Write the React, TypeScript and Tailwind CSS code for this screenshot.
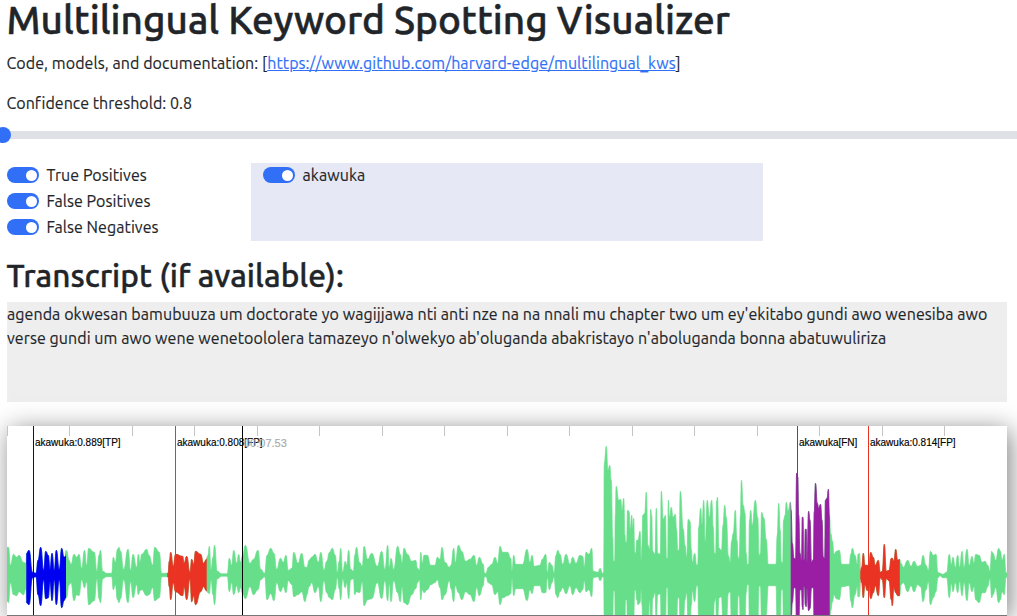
type Sample = [x: number, up: number, down: number];

const CENTER = 149;
const ORIGIN = 7;

const samples: Sample[] = [
  [7, 28, 26], [8.5, 28, 28], [10.5, 10, 8], [13.5, 21, 20], [16.7, 18, 21], [19, 20, 17], [23.5, 13, 20],
  [26, 12, 14], [26.5, 22, 28], [29, 25, 30], [32.5, 3, 3], [36, 2, 2], [38, 15, 20], [40.7, 28, 31],
  [43.7, 5, 5], [45.7, 24, 24], [48.3, 20, 23], [50, 6, 7], [52, 22, 26], [54.3, 5, 5], [56.3, 25, 30],
  [59.3, 6, 5], [61.7, 27, 33], [64, 18, 26], [65.7, 19, 23], [66.5, 25, 23], [69, 15, 10], [71, 11, 8],
  [74, 21, 26], [76.7, 18, 20], [79, 21, 21], [81.7, 7, 5], [84.5, 25, 13], [86.7, 10, 7], [88.7, 27, 30],
  [94.3, 23, 26], [97, 4, 4], [99, 20, 24], [100.5, 25, 28], [102.7, 4, 4], [106.7, 2, 2], [111.7, 2, 2],
  [113.3, 18, 15], [115.3, 13, 10], [117.5, 26, 25], [119, 28, 28], [120.5, 24, 24], [123.7, 6, 5],
  [128, 26, 28], [130.7, 5, 7], [133, 21, 23], [136.7, 8, 10], [138.3, 21, 20], [140, 13, 16],
  [141.7, 21, 15], [146.7, 26, 21], [149, 20, 20], [152.7, 10, 13], [154.7, 28, 26], [159.3, 23, 23],
  [161.7, 2, 2], [168, 2, 2], [169.3, 14, 12], [170.7, 23, 25], [173.3, 9, 8], [175.5, 21, 17],
  [182.7, 19, 21], [184, 12, 12], [186.7, 19, 25], [190, 3, 4], [191.7, 16, 27], [193.7, 11, 21],
  [195.5, 24, 30], [200.7, 21, 17], [203.5, 12, 12], [206.5, 16, 16], [208, 20, 18], [209.3, 29, 19],
  [211, 6, 5], [213, 18, 20], [214.5, 30, 30], [217.3, 4, 4], [221.7, 1.5, 1.5], [227.3, 1.5, 1.5],
  [229.3, 17, 17], [231.7, 10, 8], [233.7, 25, 20], [236.7, 12, 11], [238.7, 21, 18], [240.5, 13, 13],
  [242.7, 20, 19], [245.3, 30, 24], [250, 12, 12], [253.5, 16, 20], [258, 25, 15], [260.7, 6, 5],
  [264.7, 2, 2], [267, 20, 25], [270.7, 27, 19], [274, 22, 26], [276.7, 6, 8], [280.5, 17, 17],
  [283.3, 13, 12], [286, 20, 18], [288.3, 5, 6], [292, 7, 10], [293.7, 23, 22], [298, 12, 20],
  [301.7, 22, 17], [305, 8, 27], [307, 8, 20], [309, 15, 12], [311.7, 18, 8], [315, 21, 18],
  [318.3, 13, 12], [320.9, 23, 27], [324, 5, 6], [326.7, 14, 18], [329.5, 23, 23], [332.3, 27, 25],
  [335.3, 20, 15], [337.3, 3, 3], [339.2, 14, 14], [340.7, 27, 25], [342.7, 3, 4], [345.3, 14, 13],
  [346.7, 10, 8], [348.7, 25, 24], [350.7, 6, 5], [353.5, 4, 4], [354.7, 20, 20], [356.5, 28, 17],
  [359.5, 13, 18], [362.3, 9, 7], [364, 29, 31], [367.7, 16, 25], [371.7, 22, 24], [377.3, 9, 8],
  [381.7, 24, 24], [385, 6, 6], [387.7, 30, 26], [389.3, 8, 9], [391, 17, 27], [393.7, 6, 6],
  [397.7, 29, 18], [400.3, 21, 27], [402, 12, 12], [404, 27, 28], [407.5, 21, 30], [411.7, 14, 20],
  [415.7, 15, 14], [417.5, 7, 8], [419.6, 5, 5], [420.7, 23, 25], [422.3, 12, 15], [424, 20, 18],
  [427.3, 20, 15], [430.7, 10, 10], [435, 10, 8], [437.3, 18, 5], [440, 16, 13], [442, 28, 25],
  [445, 13, 20], [449.3, 8, 6], [451, 10, 14], [453.7, 27, 27], [455.3, 13, 11], [458.5, 30, 18],
  [461.7, 24, 25], [465.7, 14, 17], [470, 16, 20], [474, 20, 27], [476.7, 10, 13], [479.3, 18, 21],
  [483.3, 11, 11], [484.5, 2, 2], [486, 2, 2], [488.3, 8, 8], [491.7, 11, 10], [495, 18, 20],
  [497.7, 12, 17], [500, 29, 30], [502.7, 23, 23], [507.7, 23, 21], [510.7, 17, 19], [512, 4, 4],
  [513.7, 20, 21], [515.7, 11, 14], [522.7, 11, 14], [527, 26, 26], [530, 13, 15], [532, 20, 19],
  [534.3, 9, 11], [540, 10, 11], [542.3, 16, 18], [545.7, 21, 18], [547.5, 3, 3], [549.3, 13, 15],
  [552, 10, 8], [554, 2, 2], [556, 20, 20], [557.7, 25, 23], [560, 21, 17], [562.7, 11, 13],
  [566, 21, 19], [570, 11, 11], [572.7, 18, 20], [576, 12, 13], [580, 20, 18], [582.7, 19, 15],
  [584.3, 8, 6], [586, 23, 17], [589, 21, 15], [591.7, 27, 22], [593.3, 4, 3], [598, 3, 2],
  [600, 7, 6], [602.7, 2, 2], [603.7, 3, 3], [604.3, 112, 50], [606.3, 129, 50], [608, 105, 50],
  [609.7, 110, 50], [611.3, 95, 50], [612.7, 38, 50], [613.5, 14, 16], [614.7, 14, 16], [615.3, 60, 50],
  [616.2, 89, 50], [618.7, 75, 50], [620.7, 76, 50], [622, 65, 50], [623.7, 77, 50], [625, 40, 50],
  [625.5, 33, 25], [626.7, 33, 25], [627.5, 65, 50], [629, 64, 50], [630.3, 46, 50], [631.7, 60, 50],
  [632.7, 47, 50], [633.7, 57, 50], [634.7, 23, 15], [635.7, 22, 16], [636.7, 35, 25], [638, 35, 30],
  [640, 44, 28], [641.3, 14, 14], [642, 30, 30], [642.7, 60, 50], [644.7, 62, 50], [646.3, 83, 50],
  [648, 30, 50], [649.7, 26, 25], [650.7, 66, 50], [651.7, 60, 50], [652.7, 24, 24], [655, 21, 18],
  [656.3, 67, 50], [657.7, 22, 20], [660.3, 21, 19], [661.3, 84, 50], [663.3, 56, 50], [665.5, 60, 50],
  [666.5, 17, 13], [667.7, 17, 13], [668.3, 75, 50], [669.5, 58, 50], [671.3, 68, 50], [673, 58, 50],
  [675.3, 61, 50], [676.7, 45, 50], [677.7, 25, 23], [679, 25, 23], [680.3, 84, 50], [683.3, 46, 50],
  [685, 30, 25], [686.7, 18, 18], [688.2, 56, 50], [690, 54, 50], [691.5, 25, 30], [692.3, 13, 16],
  [694.7, 22, 27], [696.7, 10, 11], [697.8, 11, 11], [698.7, 48, 50], [700.7, 67, 50], [702, 51, 50],
  [703.7, 75, 50], [705.3, 33, 50], [707.3, 75, 50], [709.3, 58, 50], [711.7, 75, 50], [713.3, 48, 50],
  [714.4, 22, 27], [715.7, 22, 23], [716.5, 74, 50], [717.5, 78, 50], [719, 27, 23], [721.5, 25, 22],
  [723, 50, 50], [724.7, 70, 50], [726.3, 58, 50], [728.5, 19, 18], [730.3, 13, 17], [731.5, 34, 50],
  [733.3, 42, 50], [735.3, 65, 50], [737, 35, 50], [738.3, 16, 20], [739.3, 19, 22], [740.4, 60, 50],
  [741.4, 95, 50], [743.3, 70, 50], [745, 62, 50], [746.2, 22, 18], [747.3, 11, 10], [748.7, 11, 10],
  [749.4, 55, 50], [750.7, 65, 50], [752.3, 50, 50], [755.3, 75, 50], [757.7, 58, 50], [759.2, 20, 11],
  [760.5, 22, 12], [761.6, 63, 50], [764, 57, 50], [766.2, 36, 40], [768.3, 11, 11], [776, 11, 11],
  [777.2, 40, 50], [778.7, 72, 50], [780.3, 45, 50], [781.3, 13, 15], [782.7, 13, 15], [783.5, 55, 50],
  [785, 60, 50], [786.3, 73, 50], [788, 64, 50], [790.3, 73, 50], [791.1, 65, 45], [792.3, 32, 28],
  [794, 17, 13], [795.6, 16, 13], [796.6, 102, 50], [797.8, 98, 50], [798.7, 60, 50], [800, 22, 15],
  [801.6, 14, 15], [802.3, 58, 32], [803, 58, 35], [803.7, 15, 10], [804.6, 16, 13], [805.3, 46, 30],
  [806.2, 46, 32], [807, 13, 13], [808.6, 64, 36], [810, 55, 34], [811.5, 13, 13], [813.5, 16, 13],
  [814.2, 63, 50], [815.5, 92, 50], [817.3, 72, 50], [818.7, 67, 50], [820.5, 71, 50], [822, 55, 50],
  [823.3, 18, 50], [824.7, 17, 50], [825.4, 75, 50], [827, 77, 50], [828.4, 86, 50], [829.5, 60, 50],
  [830.7, 42, 36], [832.5, 34, 27], [834, 21, 20], [836.3, 24, 24], [839.3, 25, 25], [841.7, 11, 12],
  [849.3, 11, 11], [850.7, 21, 26], [852.3, 27, 33], [855, 20, 20], [857.3, 11, 12], [858, 21, 22],
  [859.4, 22, 22], [860.3, 3, 3], [861.7, 8, 8], [863.3, 22, 23], [865, 10, 10], [867.3, 10, 16],
  [868.7, 9, 9], [870.7, 23, 24], [873.3, 18, 18], [875.3, 10, 11], [878.3, 15, 21], [880.3, 3, 3],
  [882.3, 4, 5], [884.3, 31, 23], [886.3, 4, 4], [889, 5, 6], [891.3, 17, 25], [892.3, 17, 31],
  [893.9, 14, 13], [895.7, 26, 18], [897.7, 15, 21], [899.7, 16, 21], [901, 12, 10], [903.3, 8, 8],
  [907.7, 15, 17], [911, 9, 11], [914, 14, 17], [917.7, 9, 10], [920.7, 10, 12], [923, 20, 27],
  [926, 10, 15], [928.3, 5, 7], [930.5, 24, 30], [933.3, 20, 23], [936, 21, 17], [937.9, 3, 3],
  [940, 2, 1], [942.7, 1, 3], [946.7, 3, 3], [949.3, 21, 23], [951.3, 11, 9], [953, 18, 17],
  [955.3, 8, 8], [957.7, 20, 18], [959.7, 8, 7], [962, 24, 21], [964, 8, 8], [967, 26, 26],
  [969.3, 10, 8], [972, 19, 17], [974, 12, 12], [975.7, 21, 25], [979, 20, 28], [982.3, 13, 18],
  [985, 14, 18], [987.7, 10, 12], [990, 4, 4], [991.7, 24, 23], [993, 22, 20], [995.7, 15, 13],
  [998.7, 27, 28], [1000.5, 24, 25], [1002, 15, 17], [1004.3, 21, 20], [1006, 3, 3], [1007, 2, 2],
];

type Point = [x: number, y: number];

// Joins the points with curves that are level at every sample.
function curve(points: Point[]) {
  return points
    .slice(1)
    .map(([x, y], i) => {
      const [px, py] = points[i];
      const mid = (px + x) / 2;
      return `C${mid},${py} ${mid},${y} ${x},${y}`;
    })
    .join("");
}

const upper: Point[] = samples.map(([x, up]) => [x - ORIGIN, CENTER - up + 0.3]);
const lower: Point[] = samples.map(([x, , down]): Point => [x - ORIGIN, CENTER + down - 0.3]).reverse();
const outline = `M${upper[0].join()}${curve(upper)}L${lower[0].join()}${curve(lower)}Z`;

const regions = [
  { id: "tp", from: 19.3, to: 59, color: "#0000f0" },
  { id: "fp-1", from: 160.3, to: 199.7, color: "#ea3323" },
  { id: "fn", from: 783.7, to: 822.7, color: "#991ea4" },
  { id: "fp-2", from: 853.3, to: 892.8, color: "#ea3323" },
];

const ticks = [0, 62, 125, 187, 250, 312, 375, 437, 500, 562, 625, 687, 750, 812, 875, 937];

const markers = [
  { x: 26, color: "#0000b4", label: "akawuka:0.889[TP]" },
  { x: 168, color: "#e03a2c", label: "akawuka:0.808[FP]" },
  { x: 790, color: "#991ea4", label: "akawuka[FN]" },
  { x: 861, color: "#ea3323", label: "akawuka:0.814[FP]" },
];

function Toggle({ label }: { label: string }) {
  return (
    <label className="mb-0.5 flex h-6 items-center">
      <span className="mr-[7.5px] flex h-4 w-8 items-center justify-end rounded-full bg-[#306ff6] pr-[2.5px]">
        <span className="size-[11px] rounded-full bg-white" />
      </span>
      {label}
    </label>
  );
}

function Waveform() {
  return (
    <div className="relative mt-6 ml-[7px] h-[190px] w-[1000px] bg-white shadow-[3px_4px_24px_rgba(0,0,0,0.5)]">
      <svg width="1000" height="190" viewBox="0 0 1000 190" className="block">
        <defs>
          {regions.map((r) => (
            <clipPath key={r.id} id={r.id}>
              <rect x={r.from} y="0" width={r.to - r.from} height="190" />
            </clipPath>
          ))}
        </defs>
        {ticks.map((x) => (
          <rect key={x} x={x} y="0" width="1" height="10" fill="#c4c4c4" />
        ))}
        <path d={outline} fill="#67de8a" stroke="#67de8a" strokeWidth="0.7" strokeLinejoin="round" />
        {regions.map((r) => (
          <path
            key={r.id}
            d={outline}
            fill={r.color}
            stroke={r.color}
            strokeWidth="0.7"
            strokeLinejoin="round"
            clipPath={`url(#${r.id})`}
          />
        ))}
        {markers.map((m) => (
          <rect key={m.x} x={m.x} y="0" width="1" height="189" fill={m.color} />
        ))}
        <rect x="235" y="0" width="1" height="189" fill="#000" />
        <rect x="0" y="189" width="1000" height="1" fill="#777" />
      </svg>
      {markers.map((m) => (
        <span
          key={m.x}
          className="absolute top-[11px] font-['Liberation_Sans',sans-serif] text-[10px] leading-3 tracking-normal whitespace-nowrap text-black"
          style={{ left: m.x + 2 }}
        >
          {m.label}
        </span>
      ))}
      <span className="absolute top-[11px] left-[237px] font-['Liberation_Sans',sans-serif] text-[11px] leading-3 tracking-normal text-[#aaa]">
        00:07.53
      </span>
    </div>
  );
}

export default function App() {
  return (
    <div className="h-[616px] w-[1017px] overflow-hidden bg-white font-[Ubuntu,'Noto_Sans',sans-serif] text-base leading-6 tracking-[0.07px] text-[#212529] [-webkit-text-stroke:0.15px]">
      <h1 className="-mt-1 ml-[6.5px] h-[47px] text-[38.8px] leading-[47px] font-medium tracking-normal [-webkit-text-stroke:0.5px]">
        Multilingual Keyword Spotting Visualizer
      </h1>
      <p className="mt-2 ml-[6.5px]">
        Code, models, and documentation: [
        <a className="text-[#306ff6] underline" href="https://www.github.com/harvard-edge/multilingual_kws">
          https://www.github.com/harvard-edge/multilingual_kws
        </a>
        ]
      </p>
      <p className="mt-4 ml-[6.5px] tracking-[0.02px]">Confidence threshold: 0.8</p>
      <div className="mt-3 flex h-4 items-center">
        <div className="z-10 -ml-[5px] size-4 shrink-0 rounded-full bg-[#306ff6]" />
        <div className="-ml-2 h-2 grow bg-[#dee2e6]" />
      </div>
      <div className="mt-5 ml-[7px] flex h-[78px]">
        <div className="w-[244px]">
          <Toggle label="True Positives" />
          <Toggle label="False Positives" />
          <Toggle label="False Negatives" />
        </div>
        <div className="w-[512px] bg-[#e6e8f5] pl-3">
          <Toggle label="akawuka" />
        </div>
      </div>
      <h2 className="mt-4 ml-[6.5px] h-[38px] text-[31.6px] leading-[38px] font-medium tracking-normal [-webkit-text-stroke:0.4px]">
        Transcript (if available):
      </h2>
      <div className="mt-[7px] ml-[7px] h-[100px] w-[1000px] bg-[#eee]">
        agenda okwesan bamubuuza um doctorate yo wagijjawa nti anti nze na na nnali mu chapter two um ey'ekitabo gundi awo
        wenesiba awo verse gundi um awo wene wenetoololera tamazeyo n'olwekyo ab'oluganda abakristayo n'aboluganda bonna
        abatuwuliriza
      </div>
      <Waveform />
    </div>
  );
}
